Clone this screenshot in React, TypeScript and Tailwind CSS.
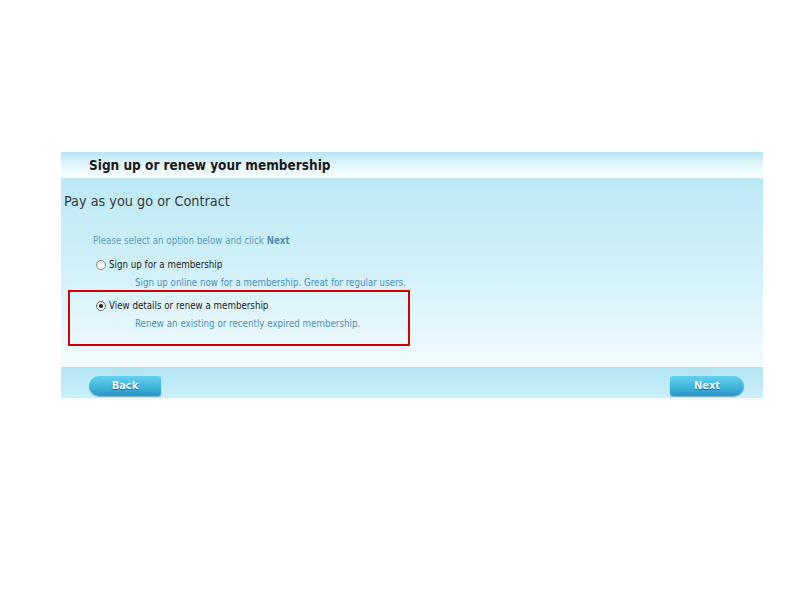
export default function App() {
  const font = { fontFamily: '"DejaVu Sans Condensed", Tahoma, "DejaVu Sans", sans-serif' }
  return (
    <div className="w-[800px] h-[600px] bg-white pt-[152px]" style={font}>
      <div className="ml-[61px] w-[702px]">
        {/* Header */}
        <div className="h-[26px] bg-gradient-to-b from-[#b7e5f3] via-[#e4f6fb] to-[#fbfeff] flex items-center pl-[28px]">
          <span className="text-[13.5px] font-bold text-[#1a1a1a] leading-[16px] -mt-[1px]">Sign up or renew your membership</span>
        </div>

        {/* Body */}
        <div className="h-[189px] bg-gradient-to-b from-[#bce9f6] via-[#d2f1f9] to-[#f3fbfe] pt-[14px]">
          <div className="pl-[3px] text-[14.3px] text-[#3a3a3a] leading-[18px]">Pay as you go or Contract</div>

          <div className="pl-[32px] mt-[25px] text-[9.7px] text-[#5b9cc0] leading-[12px]">
            Please select an option below and click <span className="font-bold text-[#4f8fb3]">Next</span>
          </div>

          <div className="pl-[35px] mt-[12px]">
            <label className="flex items-center gap-[3px] text-[9.7px] text-[#222] leading-[12px]">
              <span className="w-[10px] h-[10px] rounded-full border border-[#8a8a8a] bg-gradient-to-b from-[#e8e8e8] to-white inline-block" />
              Sign up for a membership
            </label>
            <div className="pl-[39px] mt-[6px] text-[9.7px] text-[#4b8fbb] leading-[12px]">
              Sign up online now for a membership. Great for regular users.
            </div>
          </div>

          <div className="ml-[7px] mt-[1px] w-[342px] h-[56px] border-2 border-[#d40000] pl-[26px] pt-[8px]">
            <label className="flex items-center gap-[3px] text-[9.7px] text-[#222] leading-[12px]">
              <span className="w-[10px] h-[10px] rounded-full border border-[#707070] bg-gradient-to-b from-[#e0e0e0] to-white flex items-center justify-center">
                <span className="w-[4px] h-[4px] rounded-full bg-[#1a1a1a]" />
              </span>
              View details or renew a membership
            </label>
            <div className="pl-[39px] mt-[6px] text-[9.7px] text-[#4b8fbb] leading-[12px]">
              Renew an existing or recently expired membership.
            </div>
          </div>
        </div>

        {/* Footer */}
        <div className="h-[31px] bg-gradient-to-b from-[#b3e4f3] to-[#cbf0f9] flex items-end justify-between pl-[28px] pr-[19px] pb-[2px]">
          <button className="w-[72px] h-[20px] rounded-l-[10px] rounded-r-[3px] bg-gradient-to-b from-[#63d0ee] via-[#45b8e0] to-[#2796c6] shadow-[0_1px_1px_rgba(0,80,120,0.4)] text-[11px] font-bold text-[#f4f8fa] [text-shadow:0_1px_1px_rgba(0,60,100,0.6)]">
            Back
          </button>
          <button className="w-[74px] h-[20px] rounded-r-[10px] rounded-l-[3px] bg-gradient-to-b from-[#63d0ee] via-[#45b8e0] to-[#2796c6] shadow-[0_1px_1px_rgba(0,80,120,0.4)] text-[11px] font-bold text-[#f4f8fa] [text-shadow:0_1px_1px_rgba(0,60,100,0.6)]">
            Next
          </button>
        </div>
        <div className="h-[2px] bg-[#f4fbfd]" />
      </div>
    </div>
  )
}
